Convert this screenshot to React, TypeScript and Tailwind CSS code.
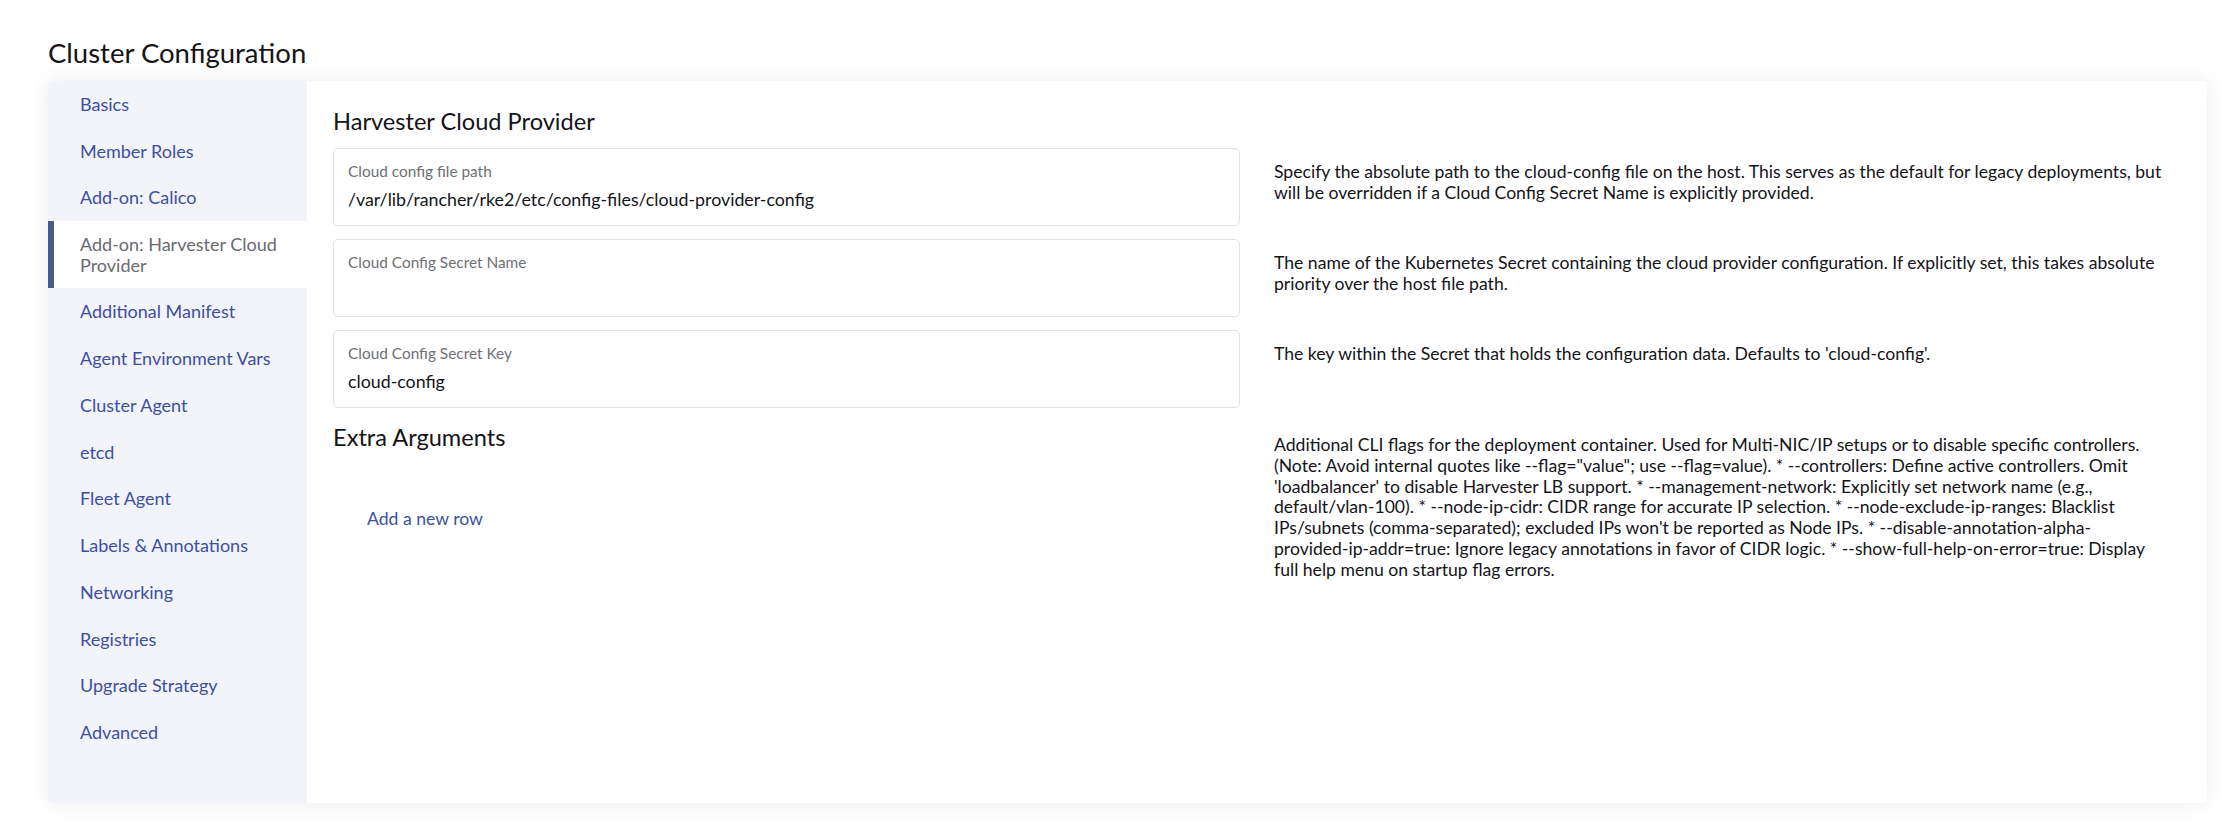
import React from "react";

const navItems = [
  "Basics",
  "Member Roles",
  "Add-on: Calico",
  "Add-on: Harvester Cloud Provider",
  "Additional Manifest",
  "Agent Environment Vars",
  "Cluster Agent",
  "etcd",
  "Fleet Agent",
  "Labels & Annotations",
  "Networking",
  "Registries",
  "Upgrade Strategy",
  "Advanced",
];

const active = "Add-on: Harvester Cloud Provider";

type FieldProps = {
  label: string;
  value?: string;
};

const Field = ({ label, value }: FieldProps) => (
  <div className="h-[78px] rounded-[5px] border border-[#e1e1e8] bg-white px-[14px] pt-[12px]">
    <div className="text-[15.4px] leading-[20px] text-[#6f6f76]">{label}</div>
    <div className="mt-[6px] text-[17.8px] leading-[24px] text-[#141419]">{value}</div>
  </div>
);

const Desc = ({ children }: { children: React.ReactNode }) => (
  <p className="pt-[14px] text-[17.6px] leading-[20.8px] text-[#141419]">{children}</p>
);

export default function App() {
  return (
    <div
      className="min-h-screen bg-white pl-[48px] pr-[25px] pt-[37px]"
      style={{ fontFamily: "Lato, 'Noto Sans', sans-serif" }}
    >
      <h1 className="text-[27.5px] leading-[32px] text-[#141419]">Cluster Configuration</h1>

      <div className="mt-[12px] flex h-[722px] overflow-hidden rounded-[4px] shadow-[0_0_22px_rgba(0,0,0,0.08)]">
        {/* side tabs */}
        <nav className="w-[259px] shrink-0 bg-[#f3f4fa]">
          {navItems.map((item) =>
            item === active ? (
              <div
                key={item}
                className="border-l-[6px] border-[#4b5a8c] bg-white py-[12.5px] pl-[26px] pr-[20px] text-[18px] leading-[21px] text-[#6a6a72]"
              >
                {item}
              </div>
            ) : (
              <div
                key={item}
                className="py-[12.9px] pl-[32px] pr-[20px] text-[18px] leading-[21px] text-[#3d4fa2]"
              >
                {item}
              </div>
            )
          )}
        </nav>

        {/* tab body */}
        <div className="flex-1 bg-white px-[26px] pt-[26px]">
          <h2 className="text-[23.6px] leading-[28px] text-[#141419]">Harvester Cloud Provider</h2>

          <div className="mt-[13px] flex flex-col gap-[13px]">
            <div className="grid grid-cols-2 gap-[34px]">
              <Field
                label="Cloud config file path"
                value="/var/lib/rancher/rke2/etc/config-files/cloud-provider-config"
              />
              <Desc>
                Specify the absolute path to the cloud-config file on the host. This serves as the default
                for legacy deployments, but will be overridden if a Cloud Config Secret Name is explicitly
                provided.
              </Desc>
            </div>

            <div className="grid grid-cols-2 gap-[34px]">
              <Field label="Cloud Config Secret Name" />
              <Desc>
                The name of the Kubernetes Secret containing the cloud provider configuration. If explicitly
                set, this takes absolute priority over the host file path.
              </Desc>
            </div>

            <div className="grid grid-cols-2 gap-[34px]">
              <Field label="Cloud Config Secret Key" value="cloud-config" />
              <Desc>The key within the Secret that holds the configuration data. Defaults to 'cloud-config'.</Desc>
            </div>

            <div className="grid grid-cols-2 gap-[34px]">
              <div>
                <h3 className="pt-[2px] text-[23.6px] leading-[28px] text-[#141419]">Extra Arguments</h3>
                <button className="ml-[34px] mt-[56px] text-[17.6px] leading-[24px] text-[#3d4fa2]">
                  Add a new row
                </button>
              </div>
              <Desc>
                Additional CLI flags for the deployment container. Used for Multi-NIC/IP setups or to disable
                specific controllers. (Note: Avoid internal quotes like --flag="value"; use --flag=value). *
                --controllers: Define active controllers. Omit 'loadbalancer' to disable Harvester LB support. *
                --management-network: Explicitly set network name (e.g., default/vlan-100). * --node-ip-cidr:
                CIDR range for accurate IP selection. * --node-exclude-ip-ranges: Blacklist IPs/subnets
                (comma-separated); excluded IPs won't be reported as Node IPs. * --disable-annotation-alpha-
                <span className="whitespace-nowrap">provided-ip-addr=true:</span> Ignore legacy annotations in
                favor of CIDR logic. * --show-full-help-on-error=true: Display{" "}
                <span className="whitespace-nowrap">full help</span> menu on startup flag errors.
              </Desc>
            </div>
          </div>
        </div>
      </div>
    </div>
  );
}
